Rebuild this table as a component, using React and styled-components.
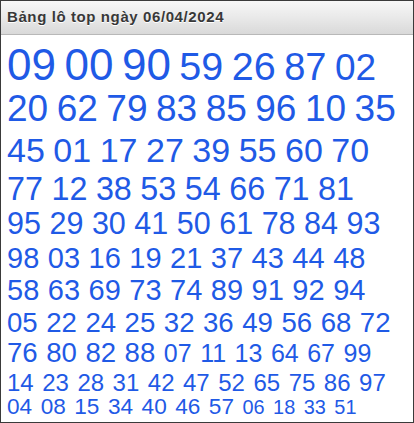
import React from 'react'
import styled, { createGlobalStyle } from 'styled-components'

const GlobalStyle = createGlobalStyle`
  html, body {
    margin: 0;
    padding: 0;
    background: #fff;
  }
  body {
    font-family: "Liberation Sans", Arial, sans-serif;
  }
`

// each row: numbers with their font size, and the row height (px)
const rows = [
  { h: 46.9, items: [['09', 44], ['00', 44], ['90', 44], ['59', 39.5], ['26', 39.5], ['87', 38], ['02', 37]] },
  { h: 43.5, items: ['20', '62', '79', '83', '85', '96', '10', '35'].map(n => [n, 37]) },
  { h: 39.7, items: ['45', '01', '17', '27', '39', '55', '60', '70'].map(n => [n, 34]) },
  { h: 35.3, items: ['77', '12', '38', '53', '54', '66', '71', '81'].map(n => [n, 32.3]) },
  { h: 36.3, items: ['95', '29', '30', '41', '50', '61', '78', '84', '93'].map(n => [n, 30.5]) },
  { h: 32, items: ['98', '03', '16', '19', '21', '37', '43', '44', '48'].map(n => [n, 29]) },
  { h: 32.1, items: ['58', '63', '69', '73', '74', '89', '91', '92', '94'].map(n => [n, 29]) },
  { h: 30, items: ['05', '22', '24', '25', '32', '36', '49', '56', '68', '72'].map(n => [n, 27.6]) },
  {
    h: 32.1,
    items: [
      ...['76', '80', '82', '88'].map(n => [n, 27.6]),
      ...['07', '11', '13', '64', '67', '99'].map(n => [n, 25]),
    ],
  },
  { h: 25.6, items: ['14', '23', '28', '31', '42', '47', '52', '65', '75', '86', '97'].map(n => [n, 24]) },
  {
    h: 24,
    items: [
      ...['04', '08', '15', '34', '40', '46', '57'].map(n => [n, 22.6]),
      ...['06', '18', '33', '51'].map(n => [n, 19.9]),
    ],
  },
]

const App = () => {
  return (
    <>
      <GlobalStyle />
      <Panel>
        <Header>Bảng lô top ngày 06/04/2024</Header>
        <Body>
          {rows.map((row, i) => (
            <Row key={i} $h={row.h}>
              {row.items.map(([num, size]) => (
                <Num key={num} $size={size}>{num}</Num>
              ))}
            </Row>
          ))}
        </Body>
      </Panel>
    </>
  )
}

export default App

const Panel = styled.div`
  width: 414px;
  height: 423px;
  box-sizing: border-box;
  border: 1px solid #3a3a3a;
  background: #fff;
  overflow: hidden;
  display: flex;
  flex-direction: column;
`

const Header = styled.div`
  height: 34px;
  flex-shrink: 0;
  box-sizing: border-box;
  padding: 7px 6px 0;
  background: linear-gradient(to bottom, #f7f7f7 0%, #e9e9e9 50%, #d9d9d9 100%);
  border-bottom: 1px solid #b8b8b8;
  color: #383838;
  font-size: 15px;
  line-height: 17px;
  letter-spacing: 0.6px;
  font-weight: bold;
  text-shadow: 0 1px 0 #fff;
`

const Body = styled.div`
  flex: 1;
  padding: 7.8px 0 0 6px;
  display: flex;
  flex-direction: column;
`

const Row = styled.div`
  display: flex;
  align-items: baseline;
  gap: 8.5px;
  height: ${p => p.$h}px;
  flex-shrink: 0;
  white-space: nowrap;
`

const Num = styled.span`
  color: #1f5ae6;
  font-size: ${p => p.$size}px;
  line-height: 1;
`
